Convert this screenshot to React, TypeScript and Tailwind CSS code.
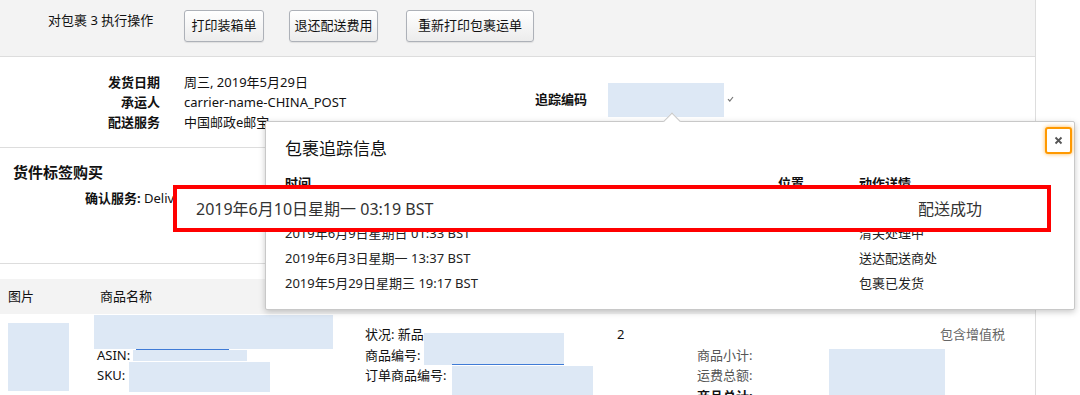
const rows = [
  { time: '2019年6月10日星期一 03:19 BST', place: '', action: '配送成功' },
  { time: '2019年6月9日星期日 01:33 BST', place: '', action: '清关处理中' },
  { time: '2019年6月3日星期一 13:37 BST', place: '', action: '送达配送商处' },
  { time: '2019年5月29日星期三 19:17 BST', place: '', action: '包裹已发货' },
];

function Btn({ label, w }: { label: string; w: string }) {
  return (
    <button
      className={`${w} h-[32px] rounded-[3px] border border-[#adb1b8] bg-gradient-to-b from-white to-[#ececec] text-[13px] text-[#111] shadow-[0_1px_1px_rgba(0,0,0,0.08)]`}
    >
      {label}
    </button>
  );
}

function Mask({ className }: { className: string }) {
  return <div className={`absolute bg-[#dde8f5] ${className}`} />;
}

export default function App() {
  return (
    <div className="relative w-[1080px] h-[395px] overflow-hidden bg-white text-[13px] text-[#111] font-['Noto_Sans','Noto_Sans_CJK_SC',sans-serif]">
      <div className="w-[1036px] h-full border-r border-[#ddd]">
        {/* actions band */}
        <div className="h-[57px] bg-[#f3f3f3] border-b border-[#ddd] flex pl-[48px]">
          <div className="w-[136px] pt-[10px] leading-[20px]">对包裹 3 执行操作</div>
          <div className="flex pt-[10px]">
            <Btn label="打印装箱单" w="w-[80px]" />
            <div className="ml-[25px]">
              <Btn label="退还配送费用" w="w-[89px]" />
            </div>
            <div className="ml-[28px]">
              <Btn label="重新打印包裹运单" w="w-[128px]" />
            </div>
          </div>
        </div>

        {/* shipment details */}
        <div className="h-[91px] border-b border-[#ddd] flex pt-[15px]">
          <div className="w-[535px] grid grid-cols-[160px_1fr] gap-x-[24px] leading-[20px] content-start">
            <div className="text-right font-bold">发货日期</div>
            <div>周三, 2019年5月29日</div>
            <div className="text-right font-bold">承运人</div>
            <div>carrier-name-CHINA_POST</div>
            <div className="text-right font-bold">配送服务</div>
            <div>中国邮政e邮宝</div>
          </div>
          <div className="flex items-center h-[34px] mt-[11px]">
            <span className="font-bold w-[73px]">追踪编码</span>
            <div className="w-[116px] h-[34px] bg-[#dde8f5]" />
            <svg width="7" height="6" viewBox="0 0 7 6" className="ml-[3px] -mt-[2px]">
              <path d="M1 3.2 L2.8 5 L6 1" fill="none" stroke="#777" strokeWidth="1.2" />
            </svg>
          </div>
        </div>

        {/* label purchase */}
        <div className="h-[116px] border-b border-[#ddd]">
          <div className="pl-[13px] pt-[13px] text-[15px] leading-[22px] font-bold">货件标签购买</div>
          <div className="pl-[85px] mt-[5px] leading-[20px]">
            <span className="font-bold">确认服务:</span> Delivery
          </div>
        </div>

        <div className="h-[15px]" />

        {/* items header */}
        <div className="h-[35px] bg-[#f3f3f3] flex items-center">
          <div className="w-[100px] pl-[8px]">图片</div>
          <div>商品名称</div>
        </div>

        {/* item row */}
        <div className="flex pt-[10px] leading-[20.5px]">
          <div className="relative w-[94px]">
            <Mask className="left-[8px] -top-[1px] w-[61px] h-[68px]" />
          </div>
          <div className="relative w-[271px] pl-[3px]">
            <div>&nbsp;</div>
            <div>ASIN:</div>
            <div>SKU:</div>
            <Mask className="left-0 -top-[9px] w-[239px] h-[34px]" />
            <Mask className="left-[39px] top-[26px] w-[114px] h-[11px]" />
            <div className="absolute left-[42px] top-[25px] w-[93px] h-px bg-[#3f7bd6]" />
            <Mask className="left-[35px] top-[38px] w-[141px] h-[30px]" />
          </div>
          <div className="relative w-[252px]">
            <div>状况: 新品</div>
            <div>商品编号:</div>
            <div>订单商品编号:</div>
            <Mask className="left-[59px] top-[9px] w-[140px] h-[32px]" />
            <div className="absolute left-[87px] top-[40px] w-[112px] h-px bg-[#3f7bd6]" />
            <Mask className="left-[87px] top-[42px] w-[141px] h-[30px]" />
          </div>
          <div className="w-[80px]">2</div>
          <div className="w-[132px] text-[#555]">
            <div>&nbsp;</div>
            <div>商品小计:</div>
            <div>运费总额:</div>
            <div className="font-bold text-[#111]">商品总计:</div>
          </div>
          <div className="relative w-[111px]">
            <div>&nbsp;</div>
            <div className="pl-[33px] font-bold">£19.98</div>
            <Mask className="left-0 top-[25px] w-[116px] h-[50px]" />
          </div>
          <div className="text-[#666]">包含增值税</div>
        </div>
      </div>

      {/* tracking popover */}
      <div className="absolute left-[265px] top-[121px] w-[810px] h-[189px] bg-white border border-[#c8c8c8] rounded-[2px] shadow-[0_2px_6px_rgba(0,0,0,0.22)]">
        <div className="absolute left-[400px] -top-[7px] w-[12px] h-[12px] rotate-45 bg-white border-l border-t border-[#c8c8c8]" />
        <button className="absolute left-[779px] top-[5px] w-[27px] h-[27px] rounded-[3px] border-2 border-[#f90] bg-white shadow-[0_0_4px_rgba(255,153,0,0.7)] flex items-center justify-center">
          <svg width="9" height="9" viewBox="0 0 9 9">
            <path d="M1.5 1.5 L7.5 7.5 M7.5 1.5 L1.5 7.5" stroke="#555" strokeWidth="1.8" />
          </svg>
        </button>
        <div className="pl-[19px] pt-[16px] text-[17px] leading-[22px] text-[#111]">包裹追踪信息</div>
        <div className="pl-[19px] mt-[11px]">
          <div className="flex h-[25px] items-center font-bold">
            <div className="w-[493px]">时间</div>
            <div className="w-[81px]">位置</div>
            <div>动作详情</div>
          </div>
          {rows.map((r) => (
            <div key={r.time} className="flex h-[25px] items-center text-[#222]">
              <div className="w-[493px]">{r.time}</div>
              <div className="w-[81px]">{r.place}</div>
              <div>{r.action}</div>
            </div>
          ))}
        </div>
      </div>

      {/* highlight */}
      <div className="absolute left-[173px] top-[185px] w-[878px] h-[47px] border-4 border-[#ff0000] bg-white flex items-center pl-[19px] text-[16px] text-[#333]">
        <span className="w-[722px]">2019年6月10日星期一 03:19 BST</span>
        <span>配送成功</span>
      </div>
    </div>
  );
}
